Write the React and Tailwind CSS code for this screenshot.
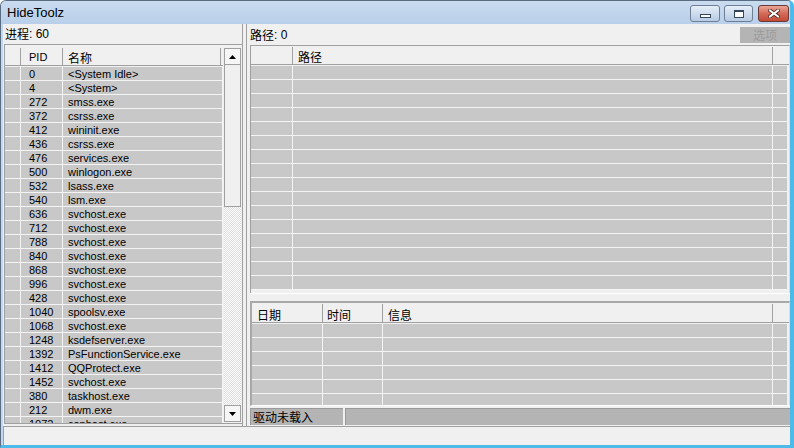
import React from 'react';

const procs = [
  ['0', '<System Idle>'],
  ['4', '<System>'],
  ['272', 'smss.exe'],
  ['372', 'csrss.exe'],
  ['412', 'wininit.exe'],
  ['436', 'csrss.exe'],
  ['476', 'services.exe'],
  ['500', 'winlogon.exe'],
  ['532', 'lsass.exe'],
  ['540', 'lsm.exe'],
  ['636', 'svchost.exe'],
  ['712', 'svchost.exe'],
  ['788', 'svchost.exe'],
  ['840', 'svchost.exe'],
  ['868', 'svchost.exe'],
  ['996', 'svchost.exe'],
  ['428', 'svchost.exe'],
  ['1040', 'spoolsv.exe'],
  ['1068', 'svchost.exe'],
  ['1248', 'ksdefserver.exe'],
  ['1392', 'PsFunctionService.exe'],
  ['1412', 'QQProtect.exe'],
  ['1452', 'svchost.exe'],
  ['380', 'taskhost.exe'],
  ['212', 'dwm.exe'],
  ['1072', 'conhost.exe'],
];

function Arrow({ down }) {
  return (
    <svg width="7" height="4" viewBox="0 0 7 4">
      <polygon points={down ? '0,0 7,0 3.5,4' : '0,4 7,4 3.5,0'} fill="#000" />
    </svg>
  );
}

function TitleBar() {
  return (
    <div className="h-[23px] flex items-start pl-[6px] pr-[1px] bg-linear-to-b from-[#c9dbef] to-[#b9cfe9]">
      <span className="text-[13px] leading-[23px] text-black font-['Liberation_Sans',sans-serif]">HideToolz</span>
      <div className="ml-auto flex mt-[4px]">
        <div className="w-[30px] h-[17px] rounded-[3px] border border-[#6e7f95] bg-linear-to-b from-[#e6eef8] to-[#b7cbe4] flex items-end justify-center pb-[3px]">
          <div className="w-[11px] h-[4px] bg-white border border-[#34465c]" />
        </div>
        <div className="w-[29px] h-[17px] ml-[4px] rounded-[3px] border border-[#6e7f95] bg-linear-to-b from-[#e6eef8] to-[#b7cbe4] flex items-center justify-center">
          <div className="w-[10px] h-[8px] bg-white border border-[#34465c] border-t-2" />
        </div>
        <div className="w-[31px] h-[17px] ml-[5px] rounded-[3px] border border-[#6b3a36] bg-linear-to-b from-[#e8a596] via-[#d46a58] to-[#c24a36] flex items-center justify-center">
          <svg width="12" height="9" viewBox="0 0 12 9">
            <path d="M2 1.5 L10 7.5 M10 1.5 L2 7.5" stroke="#4a2420" strokeWidth="3.6" strokeLinecap="square" />
            <path d="M2 1.5 L10 7.5 M10 1.5 L2 7.5" stroke="#ffffff" strokeWidth="2" strokeLinecap="square" />
          </svg>
        </div>
      </div>
    </div>
  );
}

function ProcessList() {
  return (
    <div className="h-[380px] flex border-t border-l border-b border-[#a0a0a0] bg-[#f0f0f0] overflow-hidden">
      <div className="w-[218px] shrink-0 flex flex-col overflow-hidden">
        <div className="h-[22px] shrink-0 pt-[3px]">
          <div className="flex h-[18px] border-b border-[#a0a0a0] text-[11px] leading-[19px] text-black">
            <div className="w-[16px] border-r border-[#a0a0a0]" />
            <div className="w-[42px] border-r border-[#a0a0a0] pl-[8px]">PID</div>
            <div className="w-[158px] border-r border-[#a0a0a0] pl-[5px] font-['Noto_Sans_CJK_SC',sans-serif] text-[12px]">名称</div>
          </div>
        </div>
        <div className="flex flex-col">
          {procs.map(([pid, name]) => (
            <div key={pid} className="h-[14px] shrink-0 flex bg-[#c8c8c8] border-b border-[#f4f4f4] text-[11px] leading-[14px] text-black">
              <div className="w-[16px] border-r border-[#f4f4f4]" />
              <div className="w-[42px] border-r border-[#f4f4f4] pl-[8px]">{pid}</div>
              <div className="w-[160px] border-r border-[#f4f4f4] pl-[5px] whitespace-nowrap overflow-hidden">{name}</div>
            </div>
          ))}
        </div>
      </div>
      <div className="w-[19px] shrink-0 flex flex-col pt-[3px] pl-[1px] pr-[1px] pb-[1px]">
        <div className="h-[17px] shrink-0 border border-[#a0a0a0] bg-[#f6f6f6] flex items-center justify-center">
          <Arrow />
        </div>
        <div className="h-[142px] shrink-0 border border-[#a0a0a0] border-t-0 bg-[#f0f0f0]" />
        <div className="flex-1 bg-[repeating-conic-gradient(#ffffff_0%_25%,#dcdcdc_0%_50%)] bg-[length:2px_2px]" />
        <div className="h-[17px] shrink-0 border border-[#a0a0a0] bg-[#f6f6f6] flex items-center justify-center">
          <Arrow down />
        </div>
      </div>
    </div>
  );
}

function PathList() {
  return (
    <div className="h-[248px] shrink-0 flex flex-col border-t border-l border-r border-[#a0a0a0] border-r-[#dcdcdc] overflow-hidden">
      <div className="h-[20px] shrink-0 pt-[1px]">
        <div className="flex h-[18px] border-b border-[#a0a0a0] text-[12px] leading-[20px] font-['Noto_Sans_CJK_SC',sans-serif]">
          <div className="w-[42px] border-r border-[#a0a0a0]" />
          <div className="w-[480px] border-r border-[#a0a0a0] pl-[5px]">路径</div>
          <div className="flex-1" />
        </div>
      </div>
      {Array.from({ length: 16 }).map((_, i) => (
        <div key={i} className="h-[14px] shrink-0 flex bg-[#c8c8c8] border-b border-[#f4f4f4] mr-[2px]">
          <div className="w-[42px] border-r border-[#f4f4f4]" />
          <div className="w-[480px] border-r border-[#f4f4f4]" />
          <div className="flex-1" />
        </div>
      ))}
    </div>
  );
}

function LogList() {
  return (
    <div className="h-[105px] shrink-0 flex flex-col border-t-2 border-l-2 border-[#a8a8a8] border-r border-r-[#dcdcdc] border-b border-b-[#ffffff] overflow-hidden">
      <div className="h-[21px] shrink-0 pt-[1px]">
        <div className="flex h-[19px] border-b border-[#a0a0a0] text-[12px] leading-[21px] font-['Noto_Sans_CJK_SC',sans-serif]">
          <div className="w-[71px] border-r border-[#a0a0a0] pl-[5px]">日期</div>
          <div className="w-[60px] border-r border-[#a0a0a0] pl-[4px]">时间</div>
          <div className="w-[390px] border-r border-[#a0a0a0] pl-[5px]">信息</div>
          <div className="flex-1" />
        </div>
      </div>
      {Array.from({ length: 6 }).map((_, i) => (
        <div key={i} className="h-[14px] shrink-0 flex bg-[#c8c8c8] border-b border-[#f4f4f4] mr-[2px]">
          <div className="w-[71px] border-r border-[#f4f4f4]" />
          <div className="w-[60px] border-r border-[#f4f4f4]" />
          <div className="w-[390px] border-r border-[#f4f4f4]" />
          <div className="flex-1" />
        </div>
      ))}
    </div>
  );
}

export default function App() {
  return (
    <div className="w-[794px] h-[448px] flex flex-col bg-[#c3d7ee] border-t border-l border-[#5a6c82] border-r-[4px] border-r-[#4cbbea] border-b-[3px] border-b-[#4cbbea] rounded-t-[6px] overflow-hidden font-['Liberation_Sans','Noto_Sans_CJK_SC',sans-serif] text-black">
      <TitleBar />
      <div className="flex-1 flex flex-col ml-[2px] bg-[#f0f0f0]">
        <div className="h-[402px] shrink-0 flex">
          {/* left: process list */}
          <div className="w-[240px] flex flex-col pl-[1px] border-r border-[#a0a0a0]">
            <div className="h-[20px] shrink-0 flex items-center pl-[1px] text-[12px]">
              <span className="font-['Noto_Sans_CJK_SC',sans-serif]">进程</span>
              <span>: 60</span>
            </div>
            <ProcessList />
          </div>
          <div className="w-[3px]" />
          {/* right: path + log */}
          <div className="flex-1 flex flex-col border-l border-[#a0a0a0] pl-[3px]">
            <div className="h-[21px] shrink-0 flex items-center text-[12px]">
              <span className="font-['Noto_Sans_CJK_SC',sans-serif]">路径</span>
              <span>: 0</span>
              <div className="ml-auto w-[50px] h-[16px] bg-[#b4b4b4] text-[#9c9c9c] text-[12px] leading-[16px] text-center font-['Noto_Sans_CJK_SC',sans-serif]">
                选项
              </div>
            </div>
            <PathList />
            <div className="h-[8px] shrink-0 border-t border-[#ffffff]" />
            <LogList />
            <div className="h-[2px] shrink-0" />
            <div className="h-[17px] shrink-0 flex gap-[2px]">
              <div className="w-[93px] bg-[#b4b4b4] border-t border-l border-[#9a9a9a] pl-[2px] text-[12px] leading-[16px] font-['Noto_Sans_CJK_SC',sans-serif]">
                驱动未载入
              </div>
              <div className="flex-1 bg-[#b4b4b4] border-t border-l border-[#9a9a9a]" />
            </div>
          </div>
        </div>
        <div className="flex-1 border-t border-l border-[#a0a0a0] bg-[#f0f0f0]" />
      </div>
    </div>
  );
}
